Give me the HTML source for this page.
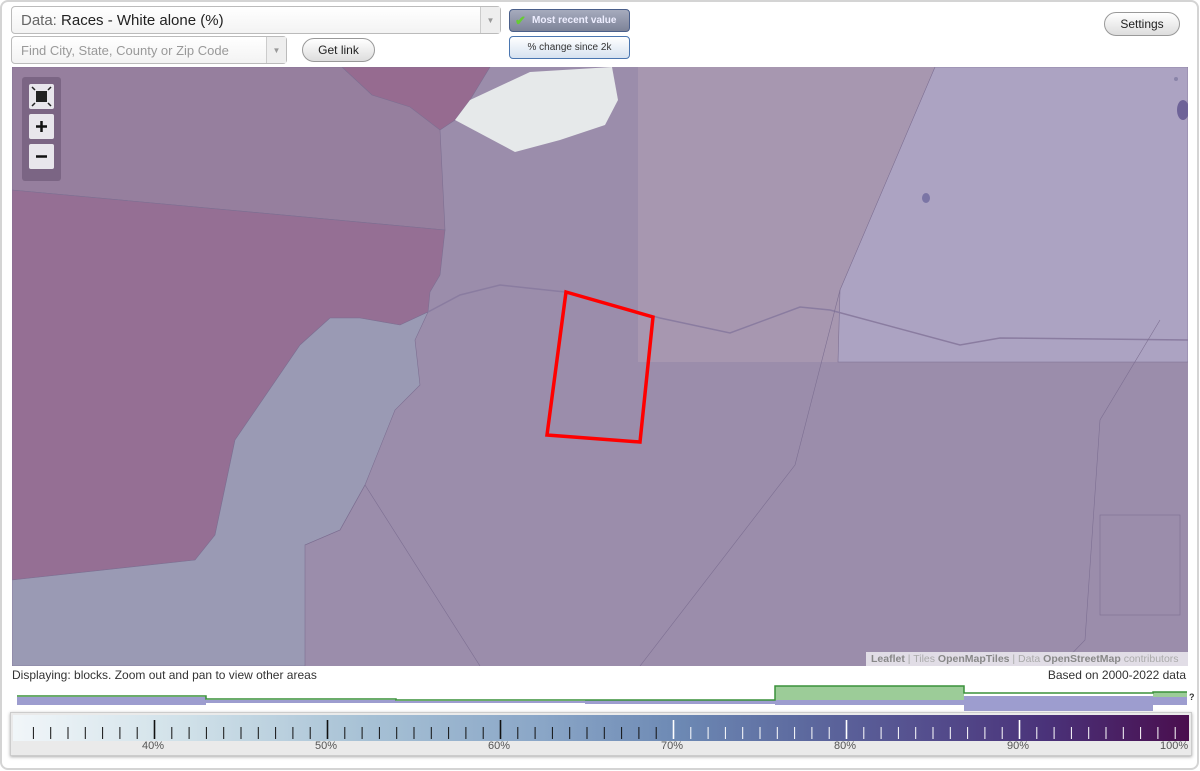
<!DOCTYPE html>
<html><head><meta charset="utf-8"><style>
*{box-sizing:border-box}
body{margin:0;width:1200px;height:771px;background:#fff;font-family:"Liberation Sans",Arial,sans-serif;overflow:hidden;position:relative}
.frame{position:absolute;left:0;top:0;width:1199px;height:770px;border:2px solid #d4d4d4;border-radius:8px}
.abs{position:absolute}
.sel{border:1px solid #bbb;border-radius:4px;background:linear-gradient(#fff,#f3f3f3);}
.arrow{position:absolute;right:0;top:0;bottom:0;width:20px;border-left:1px solid #ccc;background:#eee;color:#999;font-size:8px;text-align:center}
.btn{border:1px solid #999;border-radius:12px;background:linear-gradient(#fff,#ddd);font-size:12px;color:#222;text-align:center}
</style></head><body>
<div class="frame"></div>
<div class="abs sel" style="left:11px;top:6px;width:490px;height:28px;font-size:15px;line-height:27px;padding-left:9px;color:#222"><span style="color:#666">Data:</span> Races - White alone (%)<div class="arrow" style="line-height:27px">▼</div></div>
<div class="abs sel" style="left:11px;top:36px;width:276px;height:28px;font-size:13px;line-height:27px;padding-left:9px;color:#999">Find City, State, County or Zip Code<div class="arrow" style="line-height:27px">▼</div></div>
<div class="abs btn" style="left:302px;top:38px;width:73px;height:24px;line-height:22px">Get link</div>
<div class="abs" style="left:509px;top:9px;width:121px;height:23px;border:1px solid #4a5f8a;border-radius:4px;background:linear-gradient(#a6abbd,#7d8398);color:#eef;font-size:10px;font-weight:bold;line-height:21px;padding-left:22px">Most recent value<span style="position:absolute;left:5px;top:0;color:#6c3;font-size:13px">✔</span></div>
<div class="abs" style="left:509px;top:36px;width:121px;height:23px;border:1px solid #4a76b0;border-radius:4px;background:linear-gradient(#fff,#d6e2f0);color:#333;font-size:10px;line-height:21px;text-align:center">% change since 2k</div>
<div class="abs btn" style="left:1104px;top:12px;width:76px;height:24px;line-height:22px">Settings</div>

<svg class="abs" style="left:0;top:0" width="1200" height="771" viewBox="0 0 1200 771">
<defs><clipPath id="m"><rect x="12" y="67" width="1176" height="599"/></clipPath></defs>
<g clip-path="url(#m)" stroke="#7d6f92" stroke-width="0.6">
<rect x="12" y="67" width="1176" height="599" fill="#9b8dab" stroke="none"/>
<path d="M12 67H342L372 95L410 105L460 100L440 130L445 230L12 190Z" fill="#967f9e"/>
<path d="M342 67H490L470 100L455 120L440 130L410 107L372 95Z" fill="#966b90"/>
<path d="M12 190L445 230L440 275L430 292L428 312L400 325L360 318L330 318L300 345L235 440L215 535L195 560L12 580Z" fill="#956f94"/>
<path d="M12 580L195 560L215 535L235 440L300 345L330 318L360 318L400 325L428 312L415 340L420 385L395 410L365 485L340 530L305 545L305 666H12Z" fill="#9a9ab4"/>
<path d="M455 120L470 100L530 72L612 67L618 100L605 125L560 140L515 152Z" fill="#e6e9ea" stroke="none"/>
<path d="M638 67H1188V362H638Z" fill="#a797b0" stroke="none"/>
<path d="M935 67H1188V362H838L840 290Z" fill="#aca3c2"/>
<path d="M428 312L460 295L500 285L565 292L660 318L730 333L800 307L830 310L960 345L1000 338L1188 340" fill="none" stroke="#8a7ca0" stroke-width="1.5"/>
<path d="M305 545L340 530L365 485L480 666M840 290L795 465L640 666M1160 320L1100 420L1085 640L1060 666" fill="none"/>
<rect x="1100" y="515" width="80" height="100" fill="none"/>
<ellipse cx="1183" cy="110" rx="6" ry="10" fill="#6e6398" stroke="none"/>
<ellipse cx="926" cy="198" rx="4" ry="5" fill="#7b75a5" stroke="none"/>
<circle cx="1176" cy="79" r="2" fill="#8a84a8" stroke="none"/>
</g>
<path d="M566 292L653 317L640 442L547 435Z" fill="none" stroke="#f00" stroke-width="3.5"/>
<rect x="22" y="77" width="39" height="104" rx="3" fill="rgba(90,70,100,0.45)"/>
<rect x="29" y="84" width="25" height="25" rx="2" fill="#e8e6ec"/>
<rect x="36" y="91" width="11" height="11" fill="#222"/>
<path d="M32 87l3 3M51 87l-3 3M32 106l3-3M51 106l-3-3" stroke="#222" stroke-width="1.5"/>
<rect x="29" y="114" width="25" height="25" rx="2" fill="#e8e6ec"/>
<path d="M36 126.5h11M41.5 121v11" stroke="#111" stroke-width="2.5"/>
<rect x="29" y="144" width="25" height="25" rx="2" fill="#e8e6ec"/>
<path d="M36 156.5h11" stroke="#111" stroke-width="2.5"/>
</svg>
<div class="abs" style="left:866px;top:652px;width:322px;height:14px;background:rgba(255,255,255,0.7);font-size:10.5px;line-height:14px;color:#aaa;padding-left:5px"><b style="color:#888">Leaflet</b> | Tiles <b style="color:#888">OpenMapTiles</b> | Data <b style="color:#888">OpenStreetMap</b> contributors</div>
<div class="abs" style="left:12px;top:668px;font-size:12px;color:#333">Displaying: blocks. Zoom out and pan to view other areas</div>
<div class="abs" style="right:14px;top:668px;font-size:12px;color:#333">Based on 2000-2022 data</div>

<svg class="abs" style="left:0;top:680px" width="1200" height="35">
<rect x="17" y="17" width="189" height="8" fill="#9d9dcf"/>
<rect x="206" y="20" width="190" height="3" fill="#9d9dcf"/>
<rect x="396" y="21" width="189" height="2" fill="#9d9dcf"/>
<rect x="585" y="20" width="190" height="4" fill="#9d9dcf"/>
<rect x="775" y="20" width="189" height="5" fill="#9d9dcf"/>
<rect x="964" y="16" width="189" height="15" fill="#9d9dcf"/>
<rect x="1153" y="17" width="34" height="8" fill="#9d9dcf"/>
<rect x="775" y="6" width="189" height="14" fill="#9ccc98"/>
<rect x="1153" y="12" width="34" height="5" fill="#9ccc98"/>
<path d="M17 16H206V19H396V20H775V6H964V13H1153V12H1187" fill="none" stroke="#3a913a" stroke-width="1.5"/>
<text x="1189" y="20" font-size="9" font-weight="bold" fill="#333">?</text>
</svg>

<div class="abs" style="left:10px;top:712px;width:1182px;height:44px;border:1px solid #ccc;box-shadow:0 1px 3px #aaa;background:#eaeaea">
<div style="position:absolute;left:2px;top:2px;right:2px;height:26px;background:linear-gradient(90deg,#f1f6f9 0%,#cfe0e8 15%,#a7c1d5 30%,#8aa6c7 45%,#6c88b3 57%,#5d6a9f 67%,#55508f 77%,#4a3279 88%,#4a0e4e 100%)"></div>
<svg style="position:absolute;left:0;top:0" width="1182" height="44" id="t"></svg>
</div>
<div class="abs" style="left:10px;top:740px;width:1182px;height:14px;font-size:11px;color:#555">
<span class="abs" style="left:132px">40%</span><span class="abs" style="left:305px">50%</span><span class="abs" style="left:478px">60%</span><span class="abs" style="left:651px">70%</span><span class="abs" style="left:824px">80%</span><span class="abs" style="left:997px">90%</span><span class="abs" style="left:1150px">100%</span>
</div>
<script>
var s='',svg=document.getElementById('t');
for(var i=-7;i<=60;i++){var x=143.5+i*17.3;if(x<8||x>1178)continue;var p=i+40;var maj=p%10==0;var c=p<70?'#111':'#fff';var y1=maj?7:14;s+='<line x1="'+x+'" x2="'+x+'" y1="'+y1+'" y2="26" stroke="'+c+'" stroke-width="'+(maj?1.6:1)+'"/>';}
svg.innerHTML=s;
</script>
</body></html>
